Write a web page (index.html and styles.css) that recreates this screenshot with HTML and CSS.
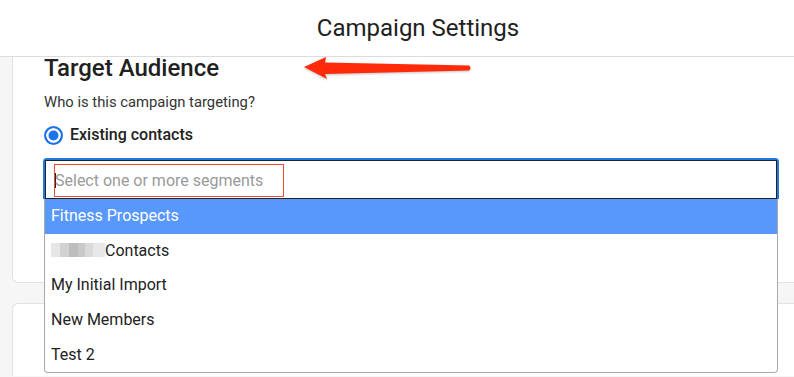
FILE: index.html
```html
<!DOCTYPE html>
<html lang="en">
<head>
  <meta charset="UTF-8">
  <meta name="viewport" content="width=device-width, initial-scale=1.0">
  <title>Campaign Settings</title>
  <link rel="stylesheet" href="styles.css">
</head>
<body>
  <header class="topbar">
    <h1>Campaign Settings</h1>
  </header>

  <main class="content">
    <section class="card">
      <h2>Target Audience</h2>
      <p class="hint">Who is this campaign targeting?</p>
      <label class="radio"><span class="radio-dot"></span>Existing contacts</label>

      <div class="select">
        <div class="select-box">
          <span class="search"><span class="caret"></span>Select one or more segments</span>
        </div>
        <ul class="dropdown">
          <li class="active">Fitness Prospects</li>
          <li><span class="blur"></span>Contacts</li>
          <li>My Initial Import</li>
          <li>New Members</li>
          <li>Test 2</li>
        </ul>
      </div>
    </section>

    <section class="card card-next"></section>
  </main>

  <!-- annotation arrow -->
  <svg class="arrow" width="180" height="35" viewBox="0 0 180 35">
    <path d="M9 17 L31 7 L30 12.5 L174 15.5 Q177 18 174 20.5 L30 24 L32 29 Z" fill="#ff2a0a"/>
  </svg>
</body>
</html>
```

FILE: styles.css
```css
body {
  margin: 0;
  font-family: Roboto, 'Liberation Sans', sans-serif;
  background: #f6f6f6;
  color: #212121;
  height: 100vh;
  overflow: hidden;
  position: relative;
}
.topbar {
  position: relative;
  z-index: 2;
  height: 56px;
  background: white;
  border-bottom: 1px solid #dcdcdc;
  padding-left: 42px;
  text-align: center;
}
.topbar h1 {
  margin: 0;
  font-size: 24px;
  font-weight: 400;
  line-height: 56px;
}
.content {
  margin-top: -12px;
  padding-left: 12px;
}
/* cards run on past the right edge of the window */
.card {
  background: white;
  border: 1px solid #e2e2e2;
  border-right: none;
  border-radius: 6px 0 0 6px;
  padding: 8px 31px 83px;
}
.card-next {
  margin-top: 20px;
  padding: 0;
  height: 72px;
  border-bottom: none;
  border-radius: 6px 0 0 0;
}
h2 {
  margin: 0;
  font-size: 24px;
  font-weight: 500;
  line-height: 28px;
}
.hint {
  margin: 10px 0 0;
  font-size: 14.8px;
  line-height: 20px;
  color: #333;
}
.radio {
  display: flex;
  align-items: center;
  gap: 7px;
  margin-top: 13px;
  font-size: 16px;
  font-weight: 500;
  line-height: 20px;
}
.radio-dot {
  width: 19px;
  height: 19px;
  box-sizing: border-box;
  border: 2px solid #1a73e8;
  border-radius: 50%;
  background: #1a73e8;
  box-shadow: inset 0 0 0 2.5px white;
}
.select {
  position: relative;
  width: 732px;
  margin: 13px 0 0 -1px;
  border: 2px solid #1f78e0;
  border-bottom: none;
  border-radius: 4px 4px 0 0;
}
.select-box {
  border: 1px solid #222;
  padding: 3px 8px 1px;
}
.search {
  display: flex;
  align-items: center;
  width: 230px;
  height: 33px;
  box-sizing: border-box;
  border: 1px solid #ea4a32;
  font-size: 16px;
  color: #9a9a9a;
}
.caret {
  width: 1px;
  height: 15px;
  background: #222;
  margin-right: -1px;
}
.dropdown {
  position: absolute;
  z-index: 1;
  top: 100%;
  left: -1px;
  right: -1px;
  margin: 0;
  padding: 0;
  list-style: none;
  background: white;
  border: 1px solid #aaa;
  border-top: none;
  border-radius: 0 0 4px 4px;
}
.dropdown li {
  display: flex;
  align-items: center;
  height: 34.7px;
  box-sizing: border-box;
  padding: 0 6px 2px;
  font-size: 16px;
  color: #222;
}
.dropdown li.active {
  background: #5897fb;
  color: white;
}
.blur {
  display: inline-block;
  width: 54px;
  height: 14px;
  background:
    linear-gradient(90deg, #e6e6e6 0 9px, #d2d2d2 9px 18px, #bdbdbd 18px 27px, #c9c9c9 27px 34px, #d9d9d9 34px 42px, #e8e8e8 42px);
}
.arrow {
  position: absolute;
  z-index: 3;
  left: 295px;
  top: 50px;
  filter: drop-shadow(0 1px 1px rgba(0, 0, 0, 0.25));
}
```
